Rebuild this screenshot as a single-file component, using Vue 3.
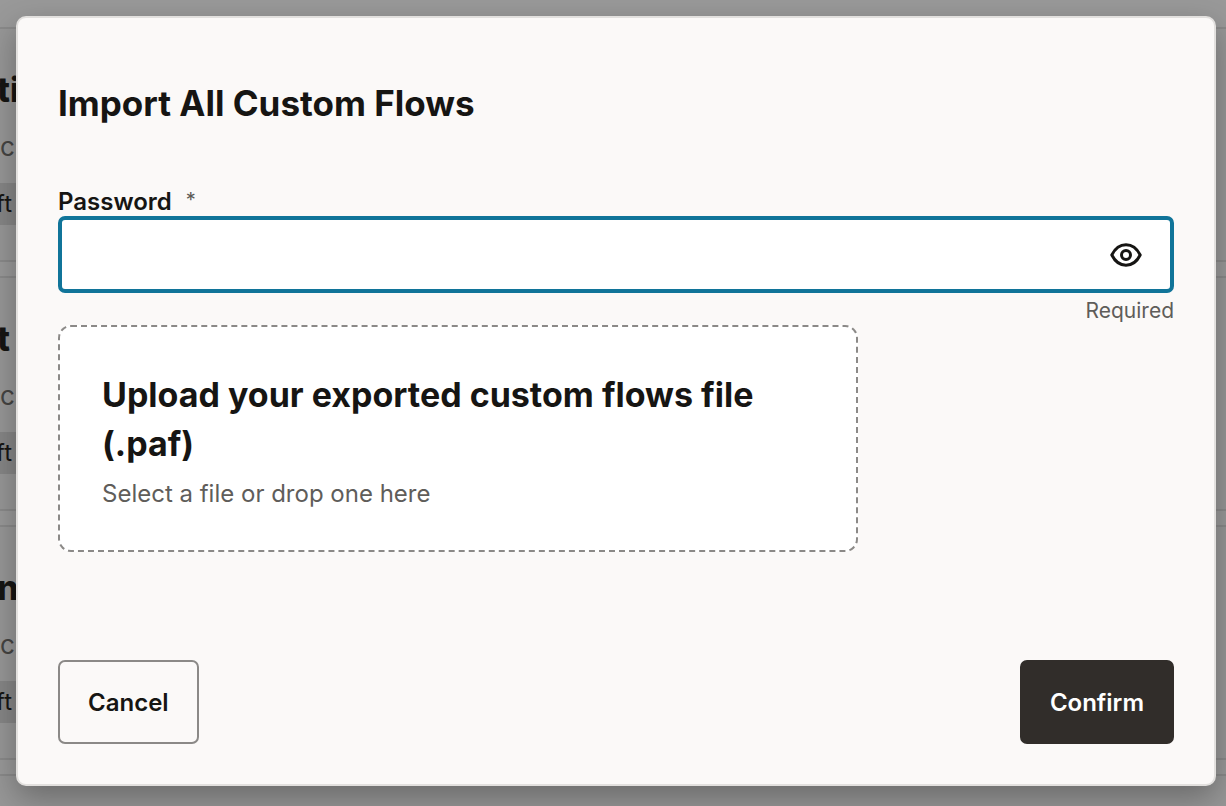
<script setup>
import { ref } from 'vue'

const password = ref('')
const visible = ref(false)

const cards = [
  { title: 'ti', text: 'c', tag: 'ft' },
  { title: 't', text: 'c', tag: 'ft' },
  { title: 'n', text: 'c', tag: 'ft' },
  { title: '', text: '', tag: '' },
]
</script>

<template>
  <div class="screen">
    <div class="backdrop" aria-hidden="true">
      <div v-for="(card, i) in cards" :key="i" class="card">
        <div class="card-title">{{ card.title }}</div>
        <div class="card-text">{{ card.text }}</div>
        <div class="card-tag"><span>{{ card.tag }}</span></div>
      </div>
    </div>

    <form class="dialog" role="dialog" aria-labelledby="dialog-title" @submit.prevent>
      <h1 id="dialog-title" class="title">Import All Custom Flows</h1>

      <div class="label-row">
        <label for="password">Password</label>
        <span class="star" aria-hidden="true">*</span>
      </div>
      <div class="field">
        <input id="password" v-model="password" :type="visible ? 'text' : 'password'" aria-describedby="hint" required />
        <button type="button" class="eye" aria-label="Show password" @click="visible = !visible">
          <svg width="32" height="24" viewBox="0 0 32 24" fill="none" stroke="currentColor" stroke-width="3">
            <path d="M1.800 12C5.200 5.200 10.200 1.800 16 1.800S26.800 5.200 30.200 12C26.800 18.800 21.800 22.200 16 22.200S5.200 18.800 1.800 12Z" stroke-linejoin="round" />
            <circle cx="16" cy="12" r="4.500" />
          </svg>
        </button>
      </div>
      <div id="hint" class="hint">Required</div>

      <label class="drop" for="file">
        <span class="drop-title">Upload your exported custom flows file (.paf)</span>
        <span class="drop-text">Select a file or drop one here</span>
        <input id="file" class="file" type="file" accept=".paf" />
      </label>

      <div class="actions">
        <button type="button" class="btn cancel">Cancel</button>
        <button type="submit" class="btn confirm">Confirm</button>
      </div>
    </form>
  </div>
</template>

<style>
body {
  margin: 0;
  background: #999;
}
</style>

<style scoped>
* {
  box-sizing: border-box;
}

.screen {
  position: relative;
  min-height: 100vh;
  padding: 16px 10px 20px 16px;
  overflow: hidden;
  background: #999;
  color: #161513;
  font-family: Inter, "Liberation Sans", sans-serif;
}

.backdrop {
  position: absolute;
  inset: 0;
  display: flex;
  flex-direction: column;
  gap: 14px;
  padding-top: 27px;
  overflow: hidden;
}

.card {
  flex: none;
  height: 235px;
  padding-top: 36px;
  border: solid #8a8a8a;
  border-width: 2px 0;
  background: #979797;
}

.card-title {
  height: 50px;
  margin-left: -3px;
  font-size: 34px;
  font-weight: 800;
  line-height: 50px;
}

.card-text {
  height: 32px;
  margin-top: 16px;
  color: #454442;
  font-size: 26px;
  line-height: 32px;
}

.card-tag {
  display: flex;
  justify-content: flex-end;
  width: 24px;
  height: 42px;
  margin-top: 20px;
  padding-right: 12px;
  background: #868686;
  font-size: 24px;
  line-height: 42px;
}

.card:last-child .card-tag {
  visibility: hidden;
}

.dialog {
  position: relative;
  display: flex;
  flex-direction: column;
  padding: 61px 40px 40px;
  border: 2px solid #e2e0de;
  border-radius: 10px;
  background: #fbf9f8;
  box-shadow: 0 12px 32px rgba(0, 0, 0, 0.3);
}

.title {
  margin: 0;
  font-size: 35px;
  font-weight: 700;
  line-height: 48px;
}

.label-row {
  display: flex;
  gap: 14px;
  margin-top: 61px;
  font-size: 24px;
  font-weight: 600;
  line-height: 28px;
}

.star {
  color: #5b5956;
  font-size: 20px;
  font-weight: 400;
  line-height: 24px;
}

.field {
  display: flex;
  align-items: center;
  height: 77px;
  border: 4px solid #107499;
  border-radius: 7px;
  background: #fff;
}

.field input {
  flex: 1;
  min-width: 0;
  height: 100%;
  padding: 0 20px;
  border: 0;
  outline: 0;
  background: transparent;
  color: inherit;
  font: 24px Inter, "Liberation Sans", sans-serif;
}

.eye {
  display: flex;
  margin-right: 28px;
  padding: 0;
  border: 0;
  background: none;
  color: #161513;
}

.hint {
  padding-top: 4px;
  color: #5f5d5a;
  font-size: 21px;
  line-height: 28px;
  text-align: right;
}

.drop {
  display: flex;
  flex-direction: column;
  position: relative;
  max-width: 800px;
  padding: 43px 42px 38px;
  border: 2px dashed #8b8987;
  border-radius: 13px;
  background: #fff;
}

.drop-title {
  font-size: 34px;
  font-weight: 700;
  line-height: 49px;
}

.drop-text {
  margin-top: 8px;
  color: #5f5d5a;
  font-size: 24px;
  line-height: 36px;
}

.file {
  position: absolute;
  width: 1px;
  height: 1px;
  opacity: 0;
}

.actions {
  display: flex;
  justify-content: space-between;
  margin-top: 108px;
}

.btn {
  height: 84px;
  padding: 0 28px;
  border: 2px solid #8b8987;
  border-radius: 7px;
  background: transparent;
  color: #161513;
  font: 600 24px Inter, "Liberation Sans", sans-serif;
}

.confirm {
  border-color: #312d2a;
  background: #312d2a;
  color: #fff;
}
</style>
